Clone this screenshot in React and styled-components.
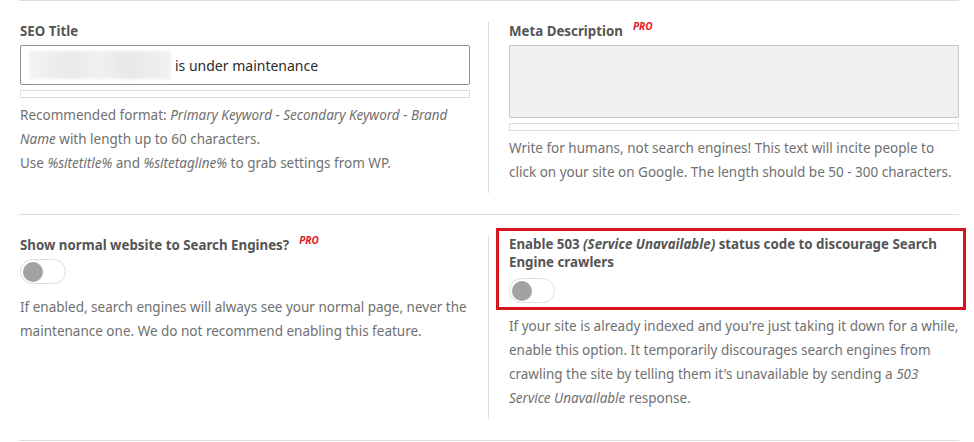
import React from "react";
import styled, { createGlobalStyle } from "styled-components";

const Global = createGlobalStyle`
  html, body { margin: 0; padding: 0; background: #fff; }
  body { font-family: "Noto Sans", "Open Sans", sans-serif; }
`;

const Wrapper = styled.div`
  margin-left: 19px;
  width: 940px;
  border-bottom: 1px solid #ddd;
`;

const Row = styled.section`
  display: grid;
  grid-template-columns: 469px 1fr;
  border-top: 1px solid #ddd;
  padding: 21px 0 21px;
`;

const Col = styled.div`
  padding: ${(p) => (p.$right ? "0 0 9px 20px" : "0 18px 9px 1px")};
  border-left: ${(p) => (p.$right ? "1px solid #ddd" : "none")};
  min-width: 0;
`;

const Label = styled.div`
  font-size: 13.3px;
  font-weight: 700;
  line-height: 18px;
  color: #555;
  margin-bottom: ${(p) => p.$mb || 0}px;
  i { font-style: italic; }
`;

const Pro = styled.sup`
  color: #e3161f;
  font-style: italic;
  font-weight: 700;
  font-size: 10px;
  margin-left: 10px;
  vertical-align: 6px;
  line-height: 0;
`;

const InputBox = styled.div`
  display: flex;
  align-items: center;
  height: 38px;
  border: 1px solid #8c8f94;
  border-radius: 2px;
  padding: 0 8px;
  font-size: 14px;
  color: #2c2c2c;
`;

const Blur = styled.span`
  display: inline-block;
  width: 142px;
  height: 28px;
  margin-right: 4px;
  background: linear-gradient(90deg, #f3f3f3 0%, #e9e9e9 30%, #f1f1f1 50%, #e7e7e7 70%, #f2f2f2 100%);
  filter: blur(1.5px);
`;

const TextArea = styled.div`
  height: 71px;
  background: #f0f0f0;
  border: 1px solid #c8c8c8;
  border-radius: 1px;
`;

const Bar = styled.div`
  height: 6px;
  border: 1px solid #dcdcdc;
  margin: 5px 0 5px;
`;

const Help = styled.p`
  margin: ${(p) => p.$mt || 0}px 0 0;
  font-size: 13.5px;
  line-height: 24px;
  color: #707070;
  em { font-style: italic; }
`;

const Toggle = styled.div`
  box-sizing: border-box;
  width: 46px;
  height: 25px;
  border: 1px solid #dedede;
  border-radius: 13px;
  background: #fff;
  display: flex;
  align-items: center;
  padding-left: 2px;
  margin-top: ${(p) => p.$mt || 0}px;
  &::before {
    content: "";
    width: 20px;
    height: 20px;
    border-radius: 50%;
    background: #a2a2a2;
  }
`;

const Highlight = styled.div`
  border: 3px solid #d7141c;
  padding: 4px 7px 4px 10px;
  margin: -8px -7px 0 -13px;
`;

export default function App() {
  return (
    <>
      <Global />
      <Wrapper>
        <Row>
          <Col>
            <Label $mb={5}>SEO Title</Label>
            <InputBox>
              <Blur />
              is under maintenance
            </InputBox>
            <Bar />
            <Help>
              Recommended format: <em>Primary Keyword - Secondary Keyword - Brand Name</em> with length up to 60 characters.
            </Help>
            <Help>
              Use <em>%sitetitle%</em> and <em>%sitetagline%</em> to grab settings from WP.
            </Help>
          </Col>
          <Col $right>
            <Label $mb={5}>
              Meta Description<Pro>PRO</Pro>
            </Label>
            <TextArea />
            <Bar />
            <Help>
              Write for humans, not search engines! This text will incite people to click on your site on Google. The length should be 50 - 300 characters.
            </Help>
          </Col>
        </Row>
        <Row>
          <Col>
            <Label>
              Show normal website to Search Engines?<Pro>PRO</Pro>
            </Label>
            <Toggle $mt={5} />
            <Help $mt={11}>
              If enabled, search engines will always see your normal page, never the maintenance one. We do not recommend enabling this feature.
            </Help>
          </Col>
          <Col $right>
            <Highlight>
              <Label>
                Enable 503 <i>(Service Unavailable)</i> status code to discourage Search Engine crawlers
              </Label>
              <Toggle $mt={7} />
            </Highlight>
            <Help $mt={4}>
              If your site is already indexed and you're just taking it down for a while, enable this option. It temporarily discourages search engines from crawling the site by telling them it's unavailable by sending a <em>503 Service Unavailable</em> response.
            </Help>
          </Col>
        </Row>
      </Wrapper>
    </>
  );
}
